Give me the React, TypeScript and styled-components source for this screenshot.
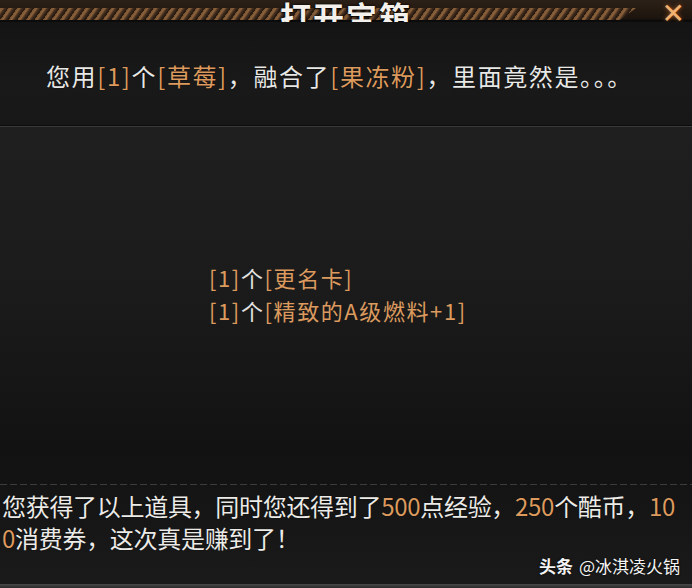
import React from "react";
import styled, { createGlobalStyle } from "styled-components";

const GlobalStyle = createGlobalStyle`
  html, body {
    margin: 0;
    padding: 0;
    background: #121212;
  }
  body {
    font-family: "Noto Sans CJK SC", "Noto Sans", sans-serif;
  }
`;

const Frame = styled.div`
  width: 692px;
  height: 588px;
  overflow: hidden;
  display: flex;
  flex-direction: column;
  background: #151515;
  font-family: "Noto Sans CJK SC", "Noto Sans", sans-serif;
`;

const Header = styled.div`
  position: relative;
  height: 22px;
  flex: none;
  display: grid;
  grid-template-columns: 1fr auto 1fr;
  align-items: end;
  overflow: hidden;
  background: linear-gradient(#2c2118 0px, #241a12 10px, #1b140e 19px, #0b0b0b 20px, #0b0b0b 22px);

  &::before {
    content: "";
    position: absolute;
    left: 0;
    top: 8px;
    width: 636px;
    height: 12px;
    background: repeating-linear-gradient(
      125deg,
      #7a5532 0px,
      #9a6c42 2px,
      #4a3220 4px,
      #2a1c12 6px,
      #2a1c12 7px
    );
    clip-path: polygon(0 0, 100% 0, 97.5% 100%, 0 100%);
    opacity: 0.9;
  }
`;

const Title = styled.div`
  position: relative;
  grid-column: 2;
  font-size: 31px;
  font-weight: 700;
  color: #f4f1ec;
  line-height: 1;
  margin-bottom: 6px;
  letter-spacing: 2px;
  text-shadow: 0 0 3px #000, 0 1px 2px #000;
`;

const Close = styled.div`
  position: relative;
  grid-column: 3;
  justify-self: end;
  margin-right: 7px;
  margin-bottom: 9px;
  font-family: "DejaVu Sans", sans-serif;
  font-size: 28px;
  font-weight: 700;
  line-height: 1;
  color: #f0b070;
  text-shadow: 0 0 4px #a0501a;
`;

const IntroPanel = styled.div`
  height: 103px;
  flex: none;
  display: flex;
  align-items: center;
  padding: 3px 0 0 46px;
  box-sizing: border-box;
  background: linear-gradient(#141414, #191919 60%, #171717);
`;

const Line = styled.div`
  font-size: 24px;
  letter-spacing: 1.6px;
  color: #e8e8e6;
  white-space: nowrap;
  text-shadow: 0 0 1px #000;
`;

const Hl = styled.span`
  color: #dc9a5e;
`;

const Divider = styled.div`
  height: 2px;
  flex: none;
  background: linear-gradient(#0c0c0c 0 1px, #3a3a3a 1px 2px);
`;

const RewardArea = styled.div`
  height: 357px;
  flex: none;
  box-sizing: border-box;
  padding: 134px 0 0 209px;
  background: linear-gradient(#1f1f1f, #1b1b1b 45%, #121212 90%, #131313);
`;

const ItemLine = styled.div`
  font-size: 22px;
  line-height: 33px;
  letter-spacing: 1.6px;
  color: #dc9a5e;
  white-space: nowrap;
`;

const Plain = styled.span`
  color: #e2e2e0;
`;

const DashedRule = styled.div`
  height: 1px;
  flex: none;
  background: repeating-linear-gradient(90deg, #3c3c3c 0 7px, transparent 7px 10px);
  background-color: #141414;
`;

const Summary = styled.div`
  flex: 1;
  display: flex;
  flex-direction: column;
  padding: 5px 0 0 2px;
  background: linear-gradient(#141414, #1a1a1a);
`;

const SummaryLine = styled.div`
  font-size: 24px;
  line-height: 32px;
  letter-spacing: -0.3px;
  color: #ecebe8;
  white-space: nowrap;
  text-shadow: 0 0 1px #000;
`;

const Watermark = styled.div`
  align-self: flex-end;
  margin: 2px 12px 0 0;
  font-size: 17px;
  line-height: 19px;
  color: #f4f4f4;
  text-shadow: 0 0 2px #000;
`;

const WmBrand = styled.span`
  font-weight: 700;
  margin-right: 6px;
`;

const BottomEdge = styled.div`
  height: 4px;
  flex: none;
  background: linear-gradient(#4a4a4a, #2a2a2a);
`;

export default function App() {
  return (
    <>
      <GlobalStyle />
      <Frame>
        <Header>
          <Title>打开宝箱</Title>
          <Close>✕</Close>
        </Header>
        <IntroPanel>
          <Line>
            您用<Hl>[1]</Hl>个<Hl>[草莓]</Hl>，融合了<Hl>[果冻粉]</Hl>，里面竟然是。。。
          </Line>
        </IntroPanel>
        <Divider />
        <RewardArea>
          <ItemLine>
            [1]<Plain>个</Plain>[更名卡]
          </ItemLine>
          <ItemLine>
            [1]<Plain>个</Plain>[精致的A级燃料+1]
          </ItemLine>
        </RewardArea>
        <DashedRule />
        <Summary>
          <SummaryLine>
            您获得了以上道具，同时您还得到了<Hl>500</Hl>点经验，<Hl>250</Hl>个酷币，<Hl>10</Hl>
          </SummaryLine>
          <SummaryLine>
            <Hl>0</Hl>消费券，这次真是赚到了！
          </SummaryLine>
          <Watermark>
            <WmBrand>头条</WmBrand>@冰淇凌火锅
          </Watermark>
        </Summary>
        <BottomEdge />
      </Frame>
    </>
  );
}
